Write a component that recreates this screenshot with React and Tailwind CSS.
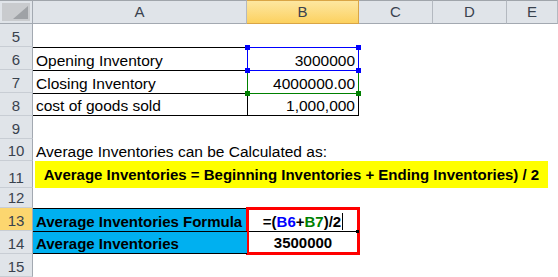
import React from 'react'

const font = { fontFamily: '"Liberation Sans", Arial, sans-serif' }

function RowHead({ n, active }) {
    return (
        <div className={`flex items-end justify-center pb-[1px] border-r border-b border-r-[#a3a9b1] border-b-[#c8cdd4] text-[15px] leading-[17px] text-[#39424e] ${active ? 'bg-[#fcd66f]' : 'bg-[#e0e4e9]'}`}>
            {n}
        </div>
    )
}

function ColHead({ label, active }) {
    return (
        <div className={`flex items-center justify-center border-t border-b border-r text-[15px] ${active ? 'bg-gradient-to-b from-[#fde7a0] to-[#fcd15e] border-[#d9a546]' : 'bg-[#e0e4e9] border-t-[#a0a5ab] border-b-[#a3a9b1] border-r-[#b4b9c0]'} text-[#39424e]`}>
            {label}
        </div>
    )
}

function Handle({ pos, color }) {
    return <span className={`absolute z-20 w-[5px] h-[5px] ${pos} ${color}`} />
}

function Empty() {
    return <div />
}

export default function App() {
    return (
        <div style={font} className="w-[558px] h-[277px] overflow-hidden bg-white text-black">
            <div className="grid grid-cols-[33px_214px_112px_74px_74px_1fr] grid-rows-[24px_23px_23px_23px_23px_23px_22px_27px_20px_23px_23px_23px]">
                {/* header */}
                <div className="relative bg-[#e0e4e9] border-t border-b border-r border-t-[#a0a5ab] border-b-[#a3a9b1] border-r-[#a3a9b1] p-[2px]">
                    <div className="relative w-full h-full bg-[#c9cbce]">
                        <svg className="absolute right-[2px] bottom-[2px]" width="15" height="13" viewBox="0 0 15 13">
                            <polygon points="15,0 15,13 0,13" fill="#9fa2a6" />
                        </svg>
                    </div>
                </div>
                <ColHead label="A" />
                <ColHead label="B" active />
                <ColHead label="C" />
                <ColHead label="D" />
                <ColHead label="E" />

                {/* row 5 */}
                <RowHead n={5} />
                <Empty /><Empty /><Empty /><Empty /><Empty />

                {/* row 6 */}
                <RowHead n={6} />
                <div className="flex items-end pl-[3px] pb-[1px] border-t border-black text-[15.5px] leading-[17px]">Opening Inventory</div>
                <div className="relative flex items-end justify-end pr-[3px] pb-[1px] border-t border-l border-r border-black text-[15.5px] leading-[17px]">
                    3000000
                    <div className="absolute z-10 -left-px -top-px -right-px -bottom-px border border-[#0000ff]" />
                    <Handle pos="-left-[3px] -top-[3px]" color="bg-[#0000ff]" />
                    <Handle pos="-right-[3px] -top-[3px]" color="bg-[#0000ff]" />
                    <Handle pos="-left-[3px] -bottom-[3px]" color="bg-[#0000ff]" />
                    <Handle pos="-right-[3px] -bottom-[3px]" color="bg-[#0000ff]" />
                </div>
                <Empty /><Empty /><Empty />

                {/* row 7 */}
                <RowHead n={7} />
                <div className="flex items-end pl-[3px] pb-[1px] border-t border-black text-[15.5px] leading-[17px]">Closing Inventory</div>
                <div className="relative flex items-end justify-end pr-[3px] pb-[1px] border-l border-r border-black text-[15.5px] leading-[17px]">
                    4000000.00
                    <div className="absolute -left-px top-0 -right-px -bottom-px border border-[#008000]" />
                    <Handle pos="-left-[3px] -bottom-[3px]" color="bg-[#008000]" />
                    <Handle pos="-right-[3px] -bottom-[3px]" color="bg-[#008000]" />
                </div>
                <Empty /><Empty /><Empty />

                {/* row 8 */}
                <RowHead n={8} />
                <div className="flex items-end pl-[3px] pb-[1px] border-t border-b border-black text-[15.5px] leading-[17px]">cost of goods sold</div>
                <div className="flex items-end justify-end pr-[3px] pb-[1px] border-t border-b border-l border-r border-black text-[15.5px] leading-[17px]">1,000,000</div>
                <Empty /><Empty /><Empty />

                {/* row 9 */}
                <RowHead n={9} />
                <Empty /><Empty /><Empty /><Empty /><Empty />

                {/* row 10 */}
                <RowHead n={10} />
                <div className="col-span-5 flex items-end pl-[3px] pb-[1px] text-[15.5px] leading-[17px] whitespace-nowrap">
                    Average Inventories can be Calculated as:
                </div>

                {/* row 11 */}
                <RowHead n={11} />
                <div className="col-span-5 ml-[2px] mr-[10px] flex items-center justify-center bg-[#ffff00] font-bold text-[15px] leading-[17px] whitespace-nowrap">
                    Average Inventories = Beginning Inventories + Ending Inventories) / 2
                </div>

                {/* row 12 */}
                <RowHead n={12} />
                <Empty /><Empty /><Empty /><Empty /><Empty />

                {/* row 13 */}
                <RowHead n={13} active />
                <div className="flex items-end pl-[3px] pb-[1px] bg-[#00b0f0] border-t border-black font-bold text-[15px] leading-[17px]">
                    Average Inventories Formula
                </div>
                <div className="row-span-2 -m-px flex flex-col border-[3px] border-[#ff0000] bg-white font-bold text-[15px] leading-[17px]">
                    <div className="relative flex-1 flex items-end justify-center pb-[1px] border-b border-black">
                        <span>
                            =(<span className="text-[#0000ff]">B6</span>+<span className="text-[#008000]">B7</span>)/2
                        </span>
                        <span className="ml-[1px] w-px h-[17px] bg-black" />
                        <span className="absolute -right-[2px] -bottom-[2px] w-[3px] h-[3px] bg-black" />
                    </div>
                    <div className="flex-1 flex items-end justify-center pb-[1px]">3500000</div>
                </div>
                <Empty /><Empty /><Empty />

                {/* row 14 */}
                <RowHead n={14} />
                <div className="flex items-end pl-[3px] pb-[1px] bg-[#00b0f0] border-t border-b border-black font-bold text-[15px] leading-[17px]">
                    Average Inventories
                </div>
                <Empty /><Empty /><Empty />

                {/* row 15 */}
                <RowHead n={15} />
                <Empty /><Empty /><Empty /><Empty /><Empty />
            </div>
        </div>
    )
}
